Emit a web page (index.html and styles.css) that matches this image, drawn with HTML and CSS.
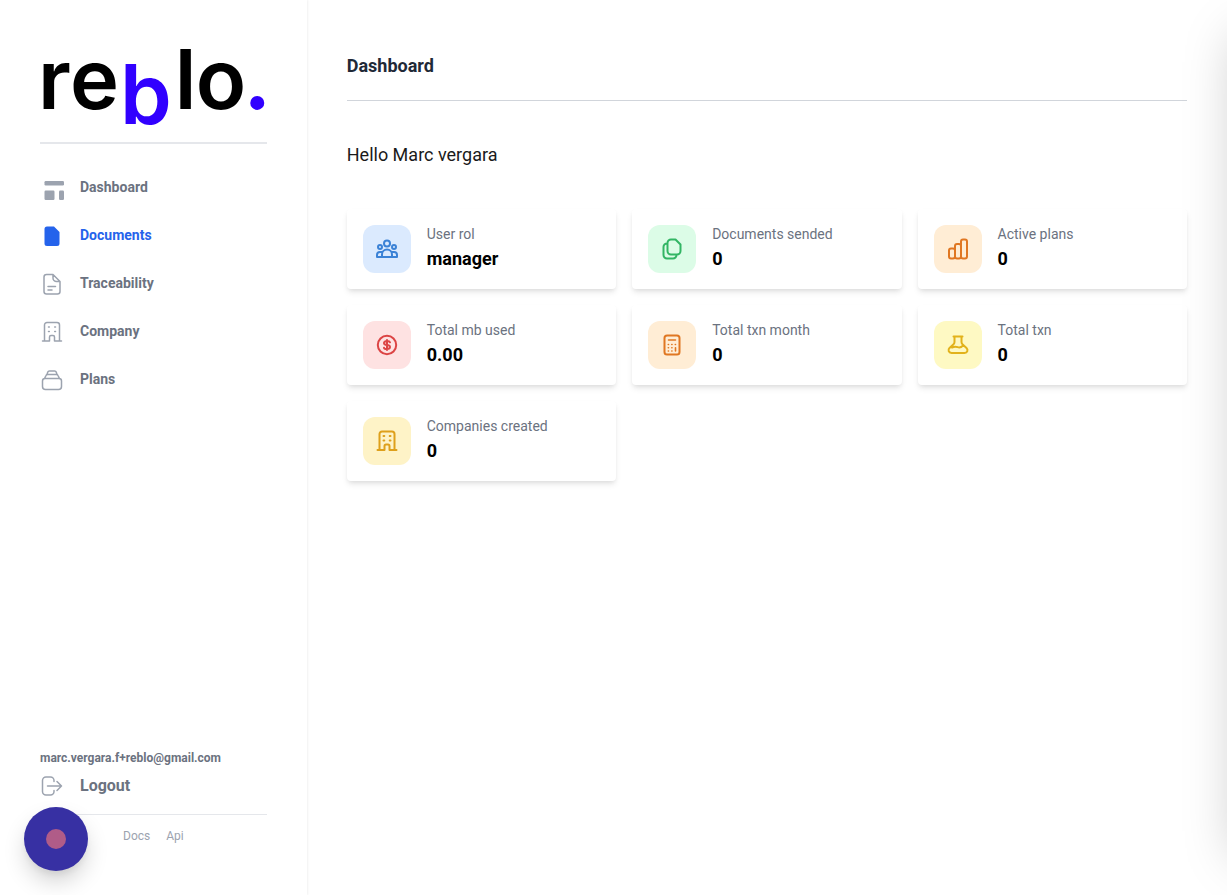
FILE: index.html
```html
<!DOCTYPE html>
<html lang="en">
<head>
<meta charset="utf-8">
<meta name="viewport" content="width=device-width, initial-scale=1">
<title>Reblo - Dashboard</title>
<link rel="stylesheet" href="styles.css">
</head>
<body>
<svg class="sprite" aria-hidden="true">
  <symbol id="building" viewBox="0 0 24 24"><path d="M4.500 20.500V5a2.500 2.500 0 0 1 2.500-2.500h10A2.500 2.500 0 0 1 19.500 5v15.500M2.500 21h6.500m6 0h6.500M9.500 21v-4a1.500 1.500 0 0 1 1.500-1.500h2a1.500 1.500 0 0 1 1.500 1.500v4M8.500 7h.8m5.400 0h.8M8.500 11.500h.8m5.400 0h.8"/></symbol>
</svg>
<div class="layout">
  <aside class="sidebar">
    <a class="logo" href="#" aria-label="reblo.">
      <svg viewBox="0 0 227 94">
        <text class="logo-text" x="-2" y="69">r</text>
        <text class="logo-text" x="30" y="69">e</text>
        <text class="logo-text logo-accent" x="80" y="84">b</text>
        <text class="logo-text" x="135" y="69">l</text>
        <text class="logo-text" x="156" y="69">o</text>
        <circle class="logo-accent" cx="217.500" cy="63" r="7"/>
      </svg>
    </a>
    <nav class="nav">
      <a class="nav-item" href="#"><svg class="icon solid" viewBox="0 0 24 24"><rect x="4.500" y="5" width="19.500" height="4.500" rx="1.200"/><rect x="4.500" y="14.500" width="10" height="9.500" rx="1.200"/><rect x="19" y="14.500" width="5" height="9.500" rx="1.200"/></svg><span>Dashboard</span></a>
      <a class="nav-item active" href="#"><svg class="icon solid" viewBox="0 0 24 24"><path d="M7 2.500h7l5.500 5.500v11.500a2.500 2.500 0 0 1-2.500 2.500H7a2.500 2.500 0 0 1-2.500-2.500V5A2.500 2.500 0 0 1 7 2.500z"/></svg><span>Documents</span></a>
      <a class="nav-item" href="#"><svg class="icon" viewBox="0 0 24 24"><path d="M6.500 2.500H13l7 7v10a2.500 2.500 0 0 1-2.500 2.500h-11A2.500 2.500 0 0 1 4 19.500V5a2.500 2.500 0 0 1 2.500-2.500zM13 2.500V6a3.500 3.500 0 0 0 3.500 3.500H20M8 14.500h7.500M8 18h4"/></svg><span>Traceability</span></a>
      <a class="nav-item" href="#"><svg class="icon" viewBox="0 0 24 24"><use href="#building"/></svg><span>Company</span></a>
      <a class="nav-item" href="#"><svg class="icon" viewBox="0 0 24 24"><path d="M5 10.500h14a2.500 2.500 0 0 1 2.500 2.500v5.500a3 3 0 0 1-3 3h-13a3 3 0 0 1-3-3V13A2.500 2.500 0 0 1 5 10.500zM4.500 10.500 6 7.500q.4-.9 1.500-.9h9q1.100 0 1.500.9l1.500 3M7 6.500l.8-2.400q.4-1.100 1.500-1.100h5.400q1.100 0 1.500 1.100L17 6.500"/></svg><span>Plans</span></a>
    </nav>
    <div class="account">
      <span class="email">marc.vergara.f+reblo@gmail.com</span>
      <button class="logout" type="button"><svg class="icon" viewBox="0 0 24 24"><path d="M14 7.500V6.500A3.500 3.500 0 0 0 10.500 3H6A3.500 3.500 0 0 0 2.500 6.500v11A3.500 3.500 0 0 0 6 21h4.500a3.500 3.500 0 0 0 3.500-3.500v-1M7.500 12h14M17 7.500l4.500 4.500-4.500 4.500"/></svg><span>Logout</span></button>
      <div class="footer-links"><a href="#">Docs</a><a href="#">Api</a></div>
    </div>
  </aside>
  <main class="main">
    <h1 class="title">Dashboard</h1>
    <p class="greeting">Hello Marc vergara</p>
    <section class="cards">
      <article class="card">
        <div class="badge blue"><svg class="icon" viewBox="0 0 24 24"><circle cx="12" cy="6.500" r="3"/><circle cx="5" cy="10" r="2"/><circle cx="19" cy="10" r="2"/><path d="M7 20v-2.500a5 5 0 0 1 10 0V20zM7 20H2v-2q0-3 3-3h2m10 5h5v-2q0-3-3-3h-2"/></svg></div>
        <div><p class="label">User rol</p><p class="value">manager</p></div>
      </article>
      <article class="card">
        <div class="badge green"><svg class="icon" viewBox="0 0 24 24"><path d="M11 2.500h4.500l5 5v6.500a3.500 3.500 0 0 1-3.500 3.500h-6a3.500 3.500 0 0 1-3.500-3.500V6A3.500 3.500 0 0 1 11 2.500zM7.500 6.500H7a3.500 3.500 0 0 0-3.500 3.500v8A3.500 3.500 0 0 0 7 21.500h6a3.500 3.500 0 0 0 3.500-3.500v-.5"/></svg></div>
        <div><p class="label">Documents sended</p><p class="value">0</p></div>
      </article>
      <article class="card">
        <div class="badge orange"><svg class="icon" viewBox="0 0 24 24"><rect x="3" y="11.500" width="6" height="10" rx="2"/><rect x="9" y="7" width="6" height="14.500" rx="2"/><rect x="15" y="2.500" width="6" height="19" rx="2"/></svg></div>
        <div><p class="label">Active plans</p><p class="value">0</p></div>
      </article>
      <article class="card">
        <div class="badge red"><svg class="icon" viewBox="0 0 24 24"><circle cx="12" cy="12" r="9.200"/><path d="M15 9.300Q14.500 8 12 8T9 10q0 1.700 3 2t3 2q0 2-3 2t-3-1.300M12 7v10"/></svg></div>
        <div><p class="label">Total mb used</p><p class="value">0.00</p></div>
      </article>
      <article class="card">
        <div class="badge orange"><svg class="icon" viewBox="0 0 24 24"><rect x="4.500" y="2.500" width="15" height="19" rx="2.500"/><path class="keys" d="M8.500 7h7M8.300 11.500h.2m3.300 0h.2m3.300 0h.2M8.300 14.700h.2m3.300 0h.2M8.300 18h.2m3.300 0h.2M15.500 14.700V18"/></svg></div>
        <div><p class="label">Total txn month</p><p class="value">0</p></div>
      </article>
      <article class="card">
        <div class="badge yellow"><svg class="icon" viewBox="0 0 24 24"><path d="M7.500 3.500h9M8.500 3.500V9q0 1.500-1.200 2.600L3.500 15q-1.500 1.500-.8 3.200T5.500 20h13q2.200 0 2.800-1.800t-.8-3.200l-3.800-3.400Q15.500 10.500 15.500 9V3.500M6 14.500q3-1.500 5.700-.3t5.300-1.700"/></svg></div>
        <div><p class="label">Total txn</p><p class="value">0</p></div>
      </article>
      <article class="card">
        <div class="badge amber"><svg class="icon" viewBox="0 0 24 24"><use href="#building"/></svg></div>
        <div><p class="label">Companies created</p><p class="value">0</p></div>
      </article>
    </section>
  </main>
</div>
<button class="bubble" type="button" aria-label="Open menu"><span class="bubble-dot"></span></button>
<div class="drawer" aria-hidden="true"></div>
</body>
</html>
```
FILE: styles.css
```css
* { box-sizing: border-box; margin: 0; padding: 0; }
body { font-family: Roboto, "Noto Sans", sans-serif; background: #fff; color: #000; overflow: hidden; }
a { color: inherit; text-decoration: none; }
button { font: inherit; border: 0; background: none; cursor: pointer; }
.sprite { display: none; }
.icon { flex: none; width: 24px; height: 24px; fill: none; stroke: currentColor; stroke-width: 1.5; stroke-linecap: round; stroke-linejoin: round; }
.solid { fill: currentColor; stroke: none; }

.layout { display: grid; grid-template-columns: 1fr 3fr; min-height: 100vh; }
.sidebar { display: flex; flex-direction: column; padding: 40px 40px 51px; box-shadow: 1px 0 2px rgba(0, 0, 0, .06); }
.logo { display: block; padding-bottom: 8px; border-bottom: 2px solid #e5e7eb; }
.logo svg { display: block; width: 100%; overflow: visible; }
.logo-text { font: 600 83px Inter, sans-serif; }
.logo-accent { fill: #3100ff; }
.nav { display: flex; flex-direction: column; gap: 24px; padding-top: 32px; }
.nav-item { display: flex; gap: 16px; font-size: 14px; line-height: 22px; font-weight: 700; color: #6b7280; }
.nav-item .icon { color: #9ca3af; }
.nav-item.active, .nav-item.active .icon { color: #2563eb; }
.account { margin-top: auto; color: #6b7280; font-weight: 700; }
.email { display: block; font-size: 12px; line-height: 16px; }
.logout { display: flex; align-items: center; gap: 16px; width: 100%; padding: 8px 0 16px; font-weight: 700; font-size: 16px; line-height: 24px; color: #6b7280; border-bottom: 1px solid #e5e7eb; }
.logout .icon { color: #9ca3af; }
.footer-links { display: flex; justify-content: center; gap: 16px; padding-top: 13px; font-size: 12px; line-height: 16px; font-weight: 400; color: #9ca3af; }

.main { padding: 52px 40px 40px; }
.title { font-size: 18px; line-height: 28px; color: #1f2937; padding-bottom: 20px; border-bottom: 1px solid #d1d5db; }
.greeting { padding: 40px 0; font-size: 18px; line-height: 28px; color: #1a1a1a; }
.cards { display: grid; grid-template-columns: repeat(3, 1fr); gap: 16px; }
.card { display: flex; align-items: center; gap: 16px; padding: 16px; border-radius: 4px; background: #fff; box-shadow: 0 4px 6px -1px rgba(0, 0, 0, .1), 0 2px 4px -1px rgba(0, 0, 0, .06); }
.badge { display: grid; place-items: center; width: 48px; height: 48px; border-radius: 12px; }
.badge .icon { stroke-width: 2; }
.badge .keys { stroke-width: 1.6; }
.blue { background: #dbeafe; color: #3b82d6; }
.green { background: #dcfce7; color: #32b564; }
.orange { background: #ffedd5; color: #e07722; }
.red { background: #fee2e2; color: #dc4444; }
.yellow { background: #fef9c3; color: #e2b21b; }
.amber { background: #fef3c7; color: #dea01b; }
.label { margin-bottom: 2px; font-size: 14px; line-height: 18px; color: #6b7280; }
.value { font-size: 18px; line-height: 28px; font-weight: 700; }

.bubble { position: fixed; left: 24px; bottom: 24px; display: grid; place-items: center; width: 64px; height: 64px; border-radius: 50%; background: #3730a3; box-shadow: 0 12px 25px -3px rgba(0, 0, 0, .2), 0 4px 10px -2px rgba(0, 0, 0, .08); }
.bubble-dot { width: 20px; height: 20px; border-radius: 50%; background: #b05c88; }
.drawer { position: fixed; top: 0; bottom: 52px; left: 100%; width: 320px; box-shadow: 0 25px 50px -12px rgba(0, 0, 0, .25); }
```
